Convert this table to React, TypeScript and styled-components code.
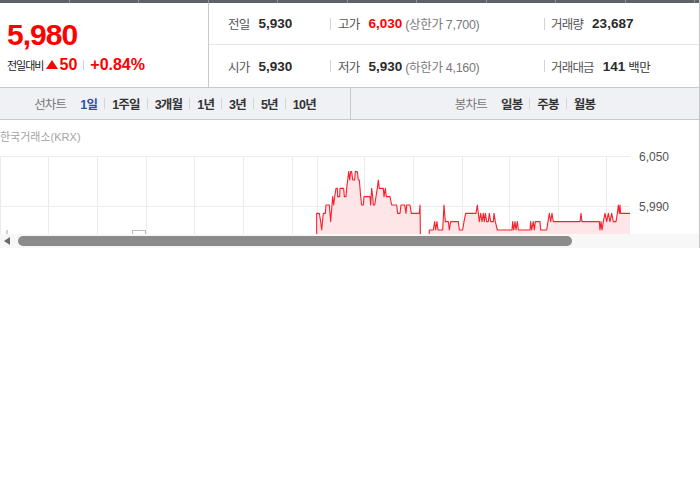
import React from "react";
import styled, { createGlobalStyle } from "styled-components";

const Global = createGlobalStyle`
  html, body { margin: 0; padding: 0; background: #fff; }
  body { font-family: "Liberation Sans", "Noto Sans CJK KR", sans-serif; color: #333; }
  * { box-sizing: border-box; }
`;

const Wrap = styled.div`
  width: 700px;
  border-right: 1px solid #c6c6c6;
  background: #fff;
`;

const TopTabs = styled.div`
  display: flex;
  height: 3px;
  background: #5d6168;
`;
const TopTab = styled.div`
  width: 69.5px;
  flex: none;
  border-right: 1px solid #8d9096;
`;

const Header = styled.div`
  display: flex;
  height: 85px;
  border-bottom: 1px solid #c9c9c9;
`;

const PricePanel = styled.div`
  width: 209px;
  flex: none;
  border-right: 1px solid #c9c9c9;
  padding: 17px 0 0 7px;
  background: #fff;
`;

const BigPrice = styled.div`
  font-size: 30px;
  font-weight: 700;
  letter-spacing: -1px;
  color: #f00;
  line-height: 30px;
  height: 31px;
`;

const ChangeRow = styled.div`
  display: flex;
  align-items: center;
  height: 20px;
  margin-top: 4px;
`;

const SmallLabel = styled.span`
  font-size: 11px;
  letter-spacing: -1px;
  color: #222;
  margin-right: 3px;
`;

const UpTri = styled.span`
  width: 0;
  height: 0;
  border-left: 6.5px solid transparent;
  border-right: 6.5px solid transparent;
  border-bottom: 9px solid #f00;
  margin: 0 1px 1px 0;
`;

const RedBold = styled.span<{ $size: number }>`
  font-size: ${(p) => p.$size}px;
  font-weight: 700;
  color: #f00;
`;

const Sep = styled.span<{ $h?: number; $m?: number }>`
  display: inline-block;
  width: 1px;
  height: ${(p) => p.$h ?? 11}px;
  background: #d4d4d4;
  margin: 0 ${(p) => p.$m ?? 6}px;
  flex: none;
`;

const InfoGrid = styled.div`
  flex: 1;
  display: flex;
  flex-direction: column;
`;

const InfoRow = styled.div<{ $first?: boolean }>`
  display: grid;
  grid-template-columns: 121px 214px 1fr;
  height: 42px;
  align-items: center;
  border-bottom: ${(p) => (p.$first ? "1px solid #e6e6e6" : "none")};
`;

const Cell = styled.div<{ $lead?: boolean; $gap?: number }>`
  display: flex;
  align-items: center;
  padding-left: ${(p) => (p.$lead ? 19 : 0)}px;
  white-space: nowrap;
`;

const Label = styled.span<{ $offset?: number }>`
  font-size: 12.5px;
  letter-spacing: -0.8px;
  color: #555;
  margin-left: ${(p) => p.$offset ?? 0}px;
  margin-right: 9px;
`;

const Value = styled.span<{ $red?: boolean }>`
  font-size: 13.5px;
  font-weight: 700;
  color: ${(p) => (p.$red ? "#f00" : "#2a2a2a")};
`;

const Sub = styled.span`
  font-size: 12.5px;
  color: #7a7a7a;
  margin-left: 3px;
  letter-spacing: -0.3px;
`;

const Unit = styled.span`
  font-size: 12.5px;
  color: #333;
  margin-left: 3px;
  letter-spacing: -0.5px;
`;

const Toolbar = styled.div`
  display: grid;
  grid-template-columns: 351px 1fr;
  height: 32px;
  background: #f0f1f5;
  border-bottom: 1px solid #c9c9c9;
`;

const ToolGroup = styled.div<{ $divider?: boolean }>`
  display: flex;
  align-items: center;
  justify-content: center;
  border-right: ${(p) => (p.$divider ? "1px solid #c9c9c9" : "none")};
`;

const ToolLabel = styled.span`
  font-size: 12.5px;
  letter-spacing: -0.8px;
  color: #777;
  margin-right: 14px;
`;

const ToolItem = styled.span<{ $active?: boolean }>`
  font-size: 12.5px;
  letter-spacing: -0.8px;
  font-weight: 700;
  color: ${(p) => (p.$active ? "#2d4fae" : "#333")};
`;

const ChartSection = styled.div`
  height: 114px;
  overflow: hidden;
`;

const Exchange = styled.div`
  padding-top: 10px;
  height: 24px;
  font-size: 11px;
  line-height: 14px;
  color: #a3a3a3;
`;

const ChartSvg = styled.svg`
  display: block;
`;

const ScrollBar = styled.div`
  display: flex;
  align-items: center;
  height: 14px;
  background: #f7f7f7;
  padding-left: 4px;
`;

const ArrowLeft = styled.span`
  width: 0;
  height: 0;
  border-top: 4.5px solid transparent;
  border-bottom: 4.5px solid transparent;
  border-right: 6px solid #6a6a6a;
  margin-right: 8px;
`;

const Thumb = styled.div`
  width: 554px;
  height: 10px;
  border-radius: 5px;
  background: #8b8b8b;
`;

const pts: number[] = [
  50, 400, 50, 280, 58, 280, 62, 305, 65, 330, 70, 280, 76, 280, 78, 255, 88, 255, 90, 280, 92, 305, 96, 255,
  98, 230, 101, 255, 104, 230, 108, 205, 112, 205, 113, 230, 119, 230, 120, 205, 131, 205, 133, 230, 138, 230,
  140, 205, 143, 180, 146, 155, 149, 180, 152, 155, 155, 155, 158, 180, 164, 180, 166, 155, 172, 155, 175, 180,
  178, 180, 182, 230, 185, 255, 190, 255, 192, 230, 210, 230, 212, 255, 215, 205, 218, 230, 220, 255, 224, 255,
  228, 230, 232, 205, 235, 180, 238, 205, 250, 205, 252, 230, 256, 205, 259, 230, 270, 230, 275, 255, 290, 255,
  293, 280, 300, 280, 303, 255, 314, 255, 318, 280, 320, 255, 330, 255, 334, 280, 358, 280, 360, 255, 362, 400,
  385, 400, 388, 330, 400, 330, 404, 305, 407, 330, 411, 305, 414, 330, 428, 330, 432, 255, 436, 305, 445, 305,
  448, 330, 452, 305, 475, 305, 478, 330, 488, 330, 492, 305, 497, 280, 528, 280, 532, 255, 538, 305, 542, 280,
  546, 305, 550, 280, 553, 305, 556, 280, 560, 305, 565, 305, 568, 280, 572, 305, 580, 305, 582, 280, 586, 305,
  592, 330, 636, 330, 638, 305, 641, 330, 645, 305, 648, 330, 652, 305, 655, 330, 690, 330, 692, 305, 695, 330,
  700, 305, 703, 330, 706, 305, 720, 305, 722, 330, 740, 330, 744, 305, 748, 280, 752, 305, 756, 280, 760, 305,
  840, 305, 843, 280, 846, 305, 898, 305, 900, 330, 903, 305, 906, 330, 910, 305, 915, 280, 920, 305, 925, 280,
  930, 305, 935, 280, 940, 305, 948, 305, 952, 280, 955, 255, 958, 280, 960, 255, 962, 280, 990, 280,
];

const linePts = (() => {
  const out: string[] = [];
  for (let i = 0; i < pts.length; i += 2) out.push(`${pts[i]},${pts[i + 1]}`);
  return out.join(" ");
})();
const fillPts = `50,400 ${linePts} 990,400`;

const vLines = [0.5, 48.5, 97.5, 146.5, 194.5, 243.5, 292.5, 317.5, 364.5, 413.5, 462.5, 509.5, 558.5, 606.5];

const Chart: React.FC = () => (
  <ChartSvg width={699} height={90} viewBox="0 0 699 90">
    <g stroke="#ebebeb" strokeWidth={1}>
      <line x1={0} y1={12.5} x2={630} y2={12.5} />
      <line x1={0} y1={62.5} x2={630} y2={62.5} />
      {vLines.map((x) => (
        <line key={x} x1={x} y1={12} x2={x} y2={90} />
      ))}
    </g>
    <rect x={6} y={86} width={2} height={6} fill="#d0d0d0" />
    <rect x={132.5} y={86.5} width={13} height={10} fill="#fff" stroke="#bdbdbd" />
    <g transform="translate(300 -24) scale(0.333333)">
      <polygon points={fillPts} fill="#fde5e8" />
      <polyline
        points={linePts}
        fill="none"
        stroke="#f5222d"
        strokeWidth={1.1}
        vectorEffect="non-scaling-stroke"
        strokeLinejoin="round"
      />
    </g>
    <text x={639} y={16.5} fontSize={12} fill="#555" fontFamily="Liberation Sans, sans-serif">
      6,050
    </text>
    <text x={639} y={66.5} fontSize={12} fill="#555" fontFamily="Liberation Sans, sans-serif">
      5,990
    </text>
  </ChartSvg>
);

const lineItems = ["1일", "1주일", "3개월", "1년", "3년", "5년", "10년"];
const candleItems = ["일봉", "주봉", "월봉"];

export default function App() {
  return (
    <>
      <Global />
      <Wrap>
        <TopTabs>
          {Array.from({ length: 10 }).map((_, i) => (
            <TopTab key={i} />
          ))}
        </TopTabs>
        <Header>
          <PricePanel>
            <BigPrice>5,980</BigPrice>
            <ChangeRow>
              <SmallLabel>전일대비</SmallLabel>
              <UpTri />
              <RedBold $size={16}>50</RedBold>
              <Sep $h={10} $m={6} />
              <RedBold $size={16}>+0.84%</RedBold>
            </ChangeRow>
          </PricePanel>
          <InfoGrid>
            <InfoRow $first>
              <Cell $lead>
                <Label>전일</Label>
                <Value>5,930</Value>
              </Cell>
              <Cell>
                <Sep $h={12} $m={0} />
                <Label $offset={7}>고가</Label>
                <Value $red>6,030</Value>
                <Sub>(상한가 7,700)</Sub>
              </Cell>
              <Cell>
                <Sep $h={12} $m={0} />
                <Label $offset={6}>거래량</Label>
                <Value>23,687</Value>
              </Cell>
            </InfoRow>
            <InfoRow>
              <Cell $lead>
                <Label>시가</Label>
                <Value>5,930</Value>
              </Cell>
              <Cell>
                <Sep $h={12} $m={0} />
                <Label $offset={7}>저가</Label>
                <Value>5,930</Value>
                <Sub>(하한가 4,160)</Sub>
              </Cell>
              <Cell>
                <Sep $h={12} $m={0} />
                <Label $offset={6}>거래대금</Label>
                <Value>141</Value>
                <Unit>백만</Unit>
              </Cell>
            </InfoRow>
          </InfoGrid>
        </Header>
        <Toolbar>
          <ToolGroup $divider>
            <ToolLabel>선차트</ToolLabel>
            {lineItems.map((t, i) => (
              <React.Fragment key={t}>
                {i > 0 && <Sep $h={11} $m={7} />}
                <ToolItem $active={i === 0}>{t}</ToolItem>
              </React.Fragment>
            ))}
          </ToolGroup>
          <ToolGroup>
            <ToolLabel>봉차트</ToolLabel>
            {candleItems.map((t, i) => (
              <React.Fragment key={t}>
                {i > 0 && <Sep $h={11} $m={7} />}
                <ToolItem>{t}</ToolItem>
              </React.Fragment>
            ))}
          </ToolGroup>
        </Toolbar>
        <ChartSection>
          <Exchange>한국거래소(KRX)</Exchange>
          <Chart />
        </ChartSection>
        <ScrollBar>
          <ArrowLeft />
          <Thumb />
        </ScrollBar>
      </Wrap>
    </>
  );
}
